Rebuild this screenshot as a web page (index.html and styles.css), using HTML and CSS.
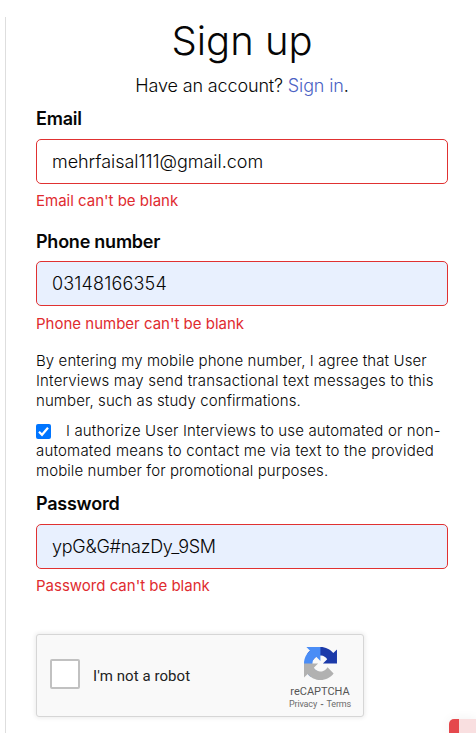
FILE: index.html
```html
<!DOCTYPE html>
<html lang="en">
<head>
<meta charset="utf-8">
<title>Sign up</title>
<link rel="stylesheet" href="styles.css">
</head>
<body>
<main class="panel">
  <h1 class="title">Sign up</h1>
  <p class="subtitle">Have an account? <a class="link" href="#">Sign in</a>.</p>
  <form class="form">
    <div class="field">
      <label class="label" for="email">Email</label>
      <input class="input email" id="email" type="text" value="mehrfaisal111@gmail.com">
      <p class="error error-email">Email can't be blank</p>
    </div>
    <div class="field field-phone">
      <label class="label" for="phone">Phone number</label>
      <input class="input filled phone" id="phone" type="text" value="03148166354">
      <p class="error error-phone">Phone number can't be blank</p>
    </div>
    <p class="note"><span class="l1">By entering my mobile phone number, I agree that User</span><br><span class="l2">Interviews may send transactional text messages to this</span><br><span class="l3">number, such as study confirmations.</span></p>
    <label class="note consent"><span class="check"><svg viewBox="0 0 15 15" width="15" height="15"><rect width="15" height="15" rx="2" fill="#0075ff"/><path d="M3 7.8 6 10.8 12 3.8" fill="none" stroke="#fff" stroke-width="2.2"/></svg></span><span class="l4">I authorize User Interviews to use automated or non-</span><br><span class="l5">automated means to contact me via text to the provided</span><br><span class="l6">mobile number for promotional purposes.</span></label>
    <div class="field field-password">
      <label class="label" for="password">Password</label>
      <input class="input filled password" id="password" type="text" value="ypG&amp;G#nazDy_9SM">
      <p class="error error-password">Password can't be blank</p>
    </div>
    <div class="captcha">
      <span class="captcha-box"></span>
      <span class="captcha-label">I'm not a robot</span>
      <div class="brand">
        <svg class="logo" viewBox="0 0 64 64">
          <path fill="#1c3aa9" d="M64 31.955l-.033-1.37V4.687l-7.16 7.16C50.948 4.674 42.033.093 32.05.093c-10.4 0-19.622 4.96-25.458 12.64l11.736 11.86a15.55 15.55 0 0 1 4.754-5.334c2.05-1.6 4.952-2.906 8.968-2.906.485 0 .86.057 1.135.163 4.976.393 9.288 3.14 11.828 7.124l-8.307 8.307L64 31.953"/>
          <path fill="#4a8df6" d="M31.862.094l-1.37.033H4.594l7.16 7.16C4.58 13.147 0 22.06 0 32.046c0 10.4 4.96 19.622 12.64 25.458L24.5 45.768a15.55 15.55 0 0 1-5.334-4.754c-1.6-2.05-2.906-4.952-2.906-8.968 0-.485.057-.86.163-1.135.393-4.976 3.14-9.288 7.124-11.828l8.307 8.307L31.86.095"/>
          <path fill="#b1b1b1" d="M.001 32.045l.033 1.37v25.898l7.16-7.16c5.86 7.173 14.774 11.754 24.76 11.754 10.4 0 19.622-4.96 25.458-12.64l-11.736-11.86a15.55 15.55 0 0 1-4.754 5.334c-2.05 1.6-4.952 2.906-8.968 2.906-.485 0-.86-.057-1.135-.163-4.976-.393-9.288-3.14-11.828-7.124l8.307-8.307c-10.522.04-22.4.066-27.295-.005"/>
        </svg>
        <span class="brand-name">reCAPTCHA</span>
        <span class="brand-links">Privacy <b class="sep">-</b> Terms</span>
      </div>
    </div>
  </form>
</main>
<div class="toast"></div>
</body>
</html>
```
FILE: styles.css
```css
* { box-sizing: border-box; }
html, body { height: 100%; overflow: hidden; }
body {
  margin: 0;
  padding-top: 17px;
  background: #fff;
  color: #060606;
  font: 300 18px/24px Inter, "Liberation Sans", sans-serif;
}
.panel {
  height: 716px;
  margin-left: 5px;
  padding: 0 28px 0 30px;
  border-left: 1px solid #dedede;
}
.title {
  margin: 0;
  font-size: 40px;
  font-weight: 300;
  line-height: 48px;
  text-align: center;
}
.subtitle { margin: 9px 0 0; text-align: center; line-height: 24px; letter-spacing: -.14px; }
.subtitle, .title, .label, .error, .note { white-space: nowrap; }
.link { color: #4b62c4; text-decoration: none; }
.form { margin-top: 9px; }
.field { display: flex; flex-direction: column; }
.label { height: 24px; font-weight: 600; letter-spacing: -.24px; }
.input {
  height: 45px;
  margin-top: 8px;
  padding: 0 15px;
  border: 1px solid #e03131;
  border-radius: 5px;
  background: #fff;
  color: #060606;
  font: inherit;
  outline: none;
}
.email { letter-spacing: -.04px; }
.phone { letter-spacing: .17px; }
.password { letter-spacing: -.26px; }
.filled { background: #e8f0fe; }
.error {
  margin: 7px 0 0;
  height: 20px;
  color: #e02b2f;
  font-size: 15px;
  font-weight: 400;
  line-height: 20px;
}
.field-phone { margin-top: 19px; }
.field-phone .input { margin-top: 7px; }
.error-phone { margin-top: 8px; }
.note { margin: 17px 0 0; font-size: 15px; line-height: 20px; }
.l1 { letter-spacing: .1px; }
.l2 { letter-spacing: .18px; }
.l3 { letter-spacing: .09px; }
.l4 { letter-spacing: .15px; }
.l5 { letter-spacing: .2px; }
.l6 { letter-spacing: .09px; }
.consent { display: block; margin-top: 10px; }
.check {
  display: inline-block;
  width: 15px;
  height: 15px;
  margin-right: 15px;
  line-height: 0;
  vertical-align: -3px;
}
.field-password { margin-top: 11px; }
.captcha {
  display: flex;
  align-items: center;
  width: 328px;
  height: 83px;
  margin-top: 38px;
  padding-left: 13px;
  border: 1px solid #d6d6d6;
  border-radius: 3px;
  background: #f9f9f9;
  box-shadow: 0 0 4px 1px rgba(0, 0, 0, .08);
  font-family: Roboto, sans-serif;
  font-weight: 400;
  white-space: nowrap;
}
.captcha-box {
  width: 30px;
  height: 30px;
  margin-top: -4px;
  border: 2px solid #c1c1c1;
  border-radius: 2px;
  background: #fff;
}
.captcha-label { margin-left: 13px; font-size: 15px; letter-spacing: .07px; color: #222; }
.brand {
  display: flex;
  flex-direction: column;
  align-items: center;
  align-self: flex-start;
  width: 70px;
  margin: 12px 8px 0 auto;
}
.logo { width: 33px; height: 33px; }
.brand-name { margin-top: 5px; color: #555; font-size: 11px; line-height: 14px; }
.brand-links { margin-top: -1px; color: #6c6c6c; font-size: 9px; line-height: 12px; letter-spacing: -.14px; }
.sep { margin: 0 1px; }
.toast {
  position: absolute;
  right: 0;
  bottom: 0;
  width: 27px;
  height: 14px;
  border-left: 10px solid #e5484d;
  border-top-left-radius: 5px;
  background: #f9dfe0;
  box-shadow: 0 0 12px rgba(0, 0, 0, .06);
}
```
